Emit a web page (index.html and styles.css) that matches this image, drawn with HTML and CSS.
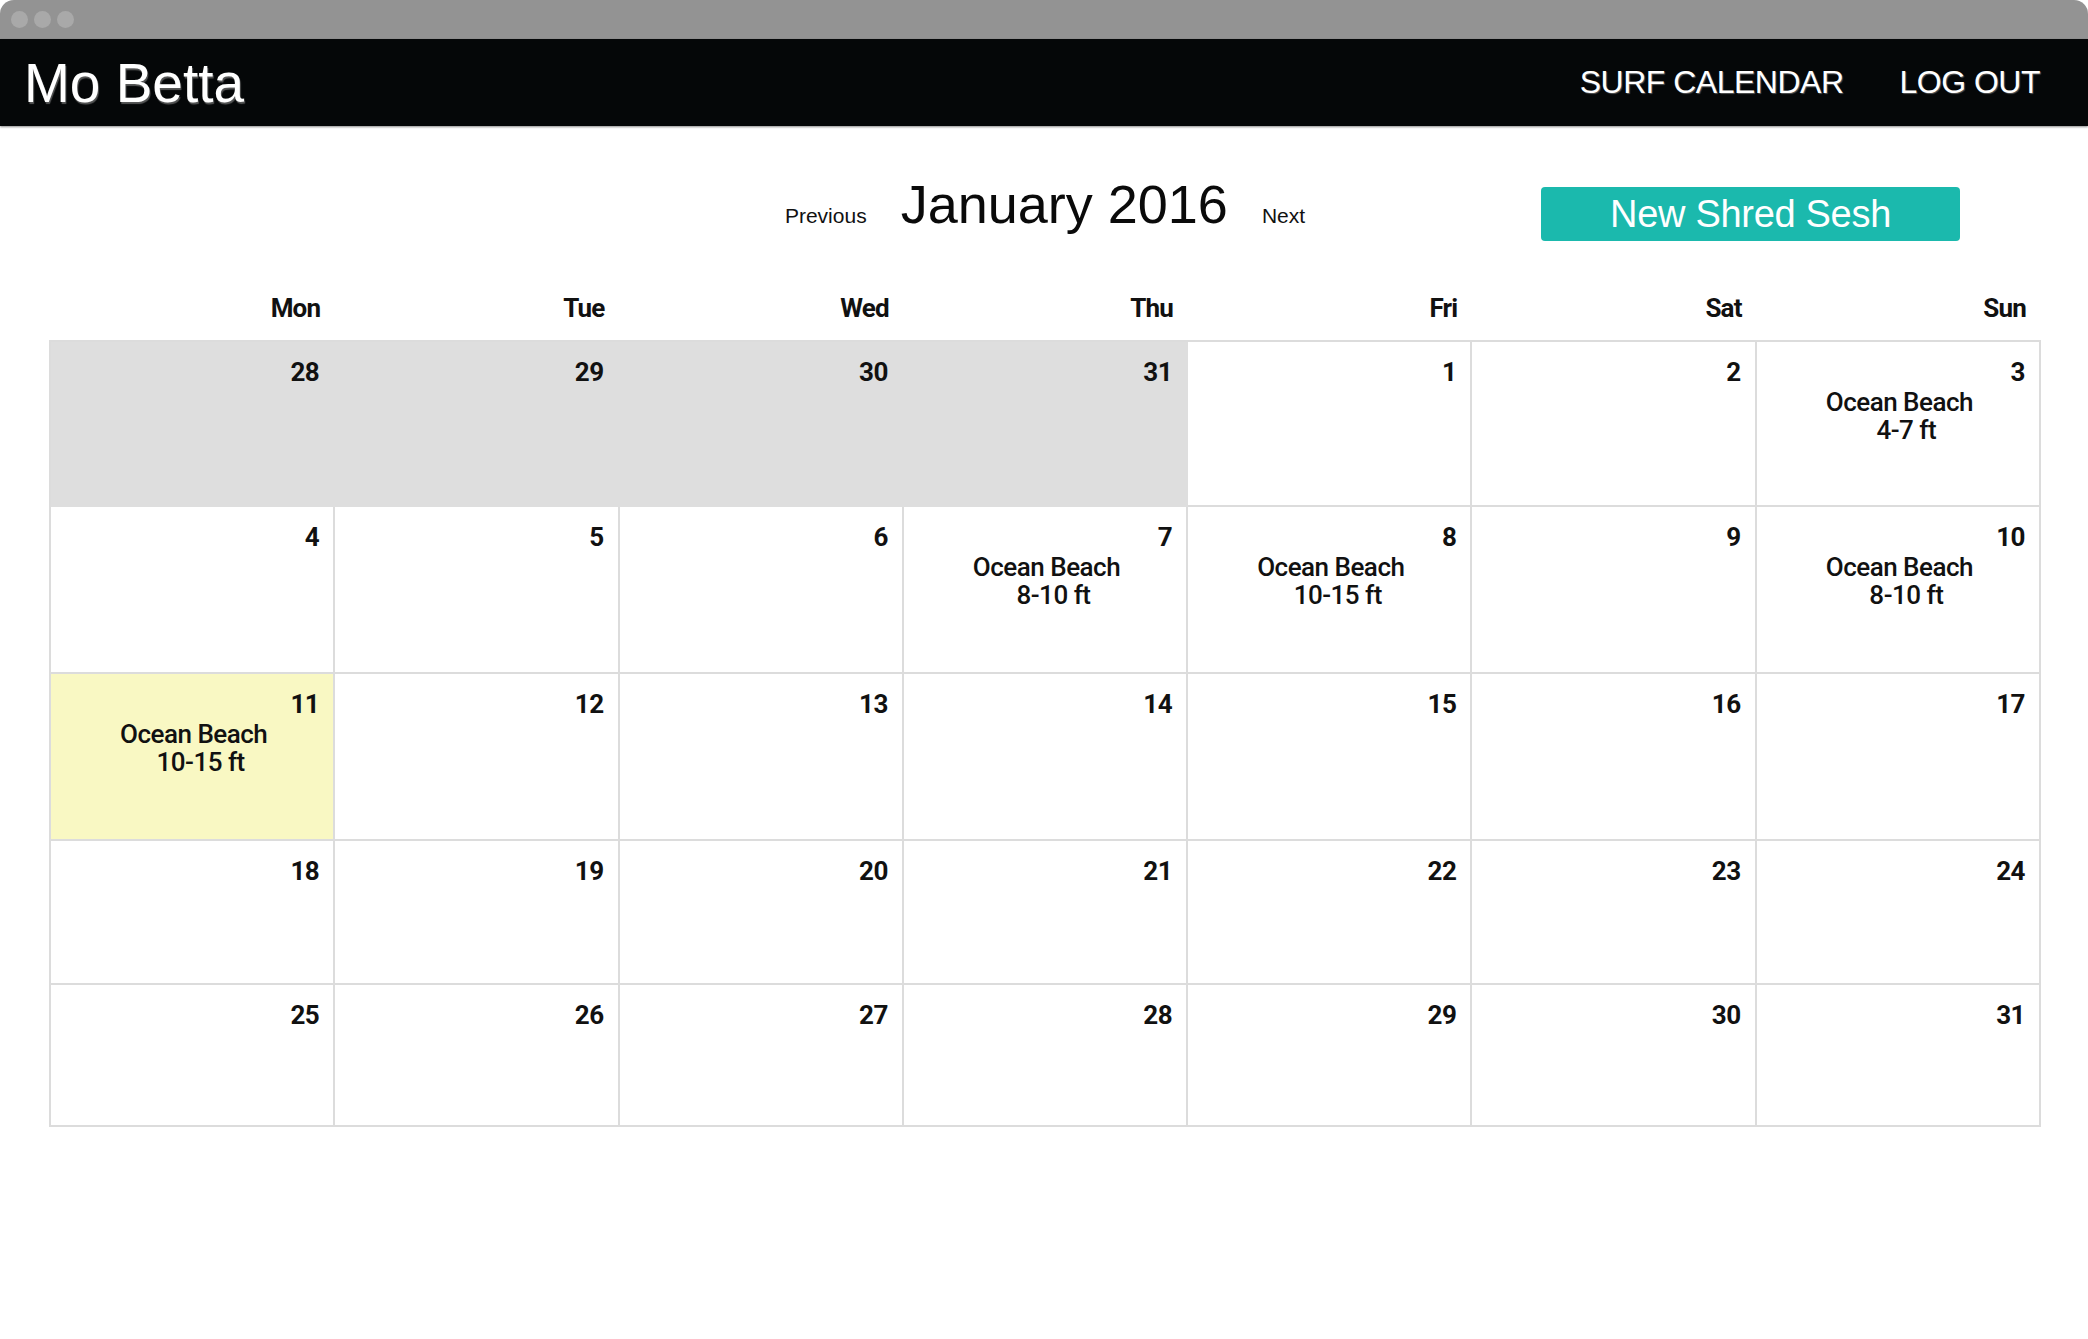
FILE: index.html
```html
<!DOCTYPE html>
<html lang="en">
<head>
<meta charset="utf-8">
<title>Mo Betta - Surf Calendar</title>
<link rel="stylesheet" href="styles.css">
</head>
<body>
<div class="window-bar">
  <span class="dot"></span><span class="dot"></span><span class="dot"></span>
</div>
<header class="nav">
  <div class="brand">Mo Betta</div>
  <nav class="links">
    <a href="#">SURF CALENDAR</a>
    <a href="#">LOG OUT</a>
  </nav>
</header>
<main class="page">
  <div class="toolbar">
    <div></div>
    <div class="month-nav">
      <a href="#" class="step">Previous</a>
      <h1 class="month">January 2016</h1>
      <a href="#" class="step">Next</a>
    </div>
    <div class="action">
      <button class="new-btn">New Shred Sesh</button>
    </div>
  </div>

  <div class="weekdays">
    <div>Mon</div><div>Tue</div><div>Wed</div><div>Thu</div><div>Fri</div><div>Sat</div><div>Sun</div>
  </div>

  <div class="calendar">
    <div class="day other"><div class="num">28</div></div>
    <div class="day other"><div class="num">29</div></div>
    <div class="day other"><div class="num">30</div></div>
    <div class="day other"><div class="num">31</div></div>
    <div class="day"><div class="num">1</div></div>
    <div class="day"><div class="num">2</div></div>
    <div class="day"><div class="num">3</div><div class="event"><span>Ocean Beach</span><span class="size">4-7 ft</span></div></div>

    <div class="day"><div class="num">4</div></div>
    <div class="day"><div class="num">5</div></div>
    <div class="day"><div class="num">6</div></div>
    <div class="day"><div class="num">7</div><div class="event"><span>Ocean Beach</span><span class="size">8-10 ft</span></div></div>
    <div class="day"><div class="num">8</div><div class="event"><span>Ocean Beach</span><span class="size">10-15 ft</span></div></div>
    <div class="day"><div class="num">9</div></div>
    <div class="day"><div class="num">10</div><div class="event"><span>Ocean Beach</span><span class="size">8-10 ft</span></div></div>

    <div class="day today"><div class="num">11</div><div class="event"><span>Ocean Beach</span><span class="size">10-15 ft</span></div></div>
    <div class="day"><div class="num">12</div></div>
    <div class="day"><div class="num">13</div></div>
    <div class="day"><div class="num">14</div></div>
    <div class="day"><div class="num">15</div></div>
    <div class="day"><div class="num">16</div></div>
    <div class="day"><div class="num">17</div></div>

    <div class="day"><div class="num">18</div></div>
    <div class="day"><div class="num">19</div></div>
    <div class="day"><div class="num">20</div></div>
    <div class="day"><div class="num">21</div></div>
    <div class="day"><div class="num">22</div></div>
    <div class="day"><div class="num">23</div></div>
    <div class="day"><div class="num">24</div></div>

    <div class="day"><div class="num">25</div></div>
    <div class="day"><div class="num">26</div></div>
    <div class="day"><div class="num">27</div></div>
    <div class="day"><div class="num">28</div></div>
    <div class="day"><div class="num">29</div></div>
    <div class="day"><div class="num">30</div></div>
    <div class="day"><div class="num">31</div></div>
  </div>
</main>
</body>
</html>
```

FILE: styles.css
```css
* {
  box-sizing: border-box;
}

html, body {
  margin: 0;
  padding: 0;
  background: #ffffff;
}

body {
  font-family: "Liberation Sans", Arial, sans-serif;
  color: #111111;
}

.window-bar {
  height: 39px;
  background: #939393;
  border-radius: 14px 14px 0 0;
  display: flex;
  align-items: center;
  gap: 6px;
  padding-left: 11px;
}

.dot {
  width: 17px;
  height: 17px;
  border-radius: 50%;
  background: #a9a9a9;
}

.nav {
  height: 87px;
  background: #050708;
  display: flex;
  align-items: center;
  justify-content: space-between;
  padding: 0 48px 0 24px;
  box-shadow: 0 1px 2px rgba(0, 0, 0, 0.45);
  position: relative;
}

.brand {
  color: #ffffff;
  font-size: 55px;
  line-height: 62px;
  text-shadow: 1px 2px 1px rgba(120, 120, 120, 0.7);
}

.links {
  display: flex;
  gap: 56px;
}

.links a {
  color: #ffffff;
  text-decoration: none;
  font-size: 32px;
  letter-spacing: -0.5px;
  line-height: 37px;
  text-shadow: 1px 1px 1px rgba(120, 120, 120, 0.7);
}

.page {
  margin: 0 47px 0 49px;
}

.toolbar {
  margin-top: 48px;
  display: grid;
  grid-template-columns: 1fr auto 1fr;
  align-items: start;
}

.month-nav {
  display: flex;
  align-items: baseline;
  gap: 34px;
}

.step {
  color: #111111;
  text-decoration: none;
  font-size: 21px;
}

.month {
  margin: 0;
  font-weight: normal;
  font-size: 54px;
  line-height: 61px;
  color: #0a0a0a;
}

.action {
  justify-self: end;
  padding-right: 81px;
}

.new-btn {
  margin-top: 13px;
  width: 419px;
  height: 54px;
  border: none;
  border-radius: 4px;
  background: #1bb9ad;
  color: #ffffff;
  font-family: "Liberation Sans", Arial, sans-serif;
  font-size: 38px;
  letter-spacing: -0.3px;
  padding: 0;
  line-height: 54px;
}

.weekdays {
  margin-top: 52px;
  padding: 0 0 17px 2px;
  display: grid;
  grid-template-columns: repeat(7, 1fr);
  font-family: Roboto, "Liberation Sans", sans-serif;
  font-weight: 700;
  font-size: 26px;
  letter-spacing: -0.8px;
  line-height: 30px;
}

.weekdays div {
  text-align: right;
  padding-right: 15px;
}

.calendar {
  display: grid;
  grid-template-columns: repeat(7, 1fr);
  grid-template-rows: 165px 167px 167px 144px 142px;
  border-top: 2px solid #dcdcdc;
  border-left: 2px solid #dcdcdc;
  font-family: Roboto, "Liberation Sans", sans-serif;
}

.day {
  border-right: 2px solid #dcdcdc;
  border-bottom: 2px solid #dcdcdc;
  padding: 15px 14px 0 17px;
  background: #ffffff;
}

.day.other {
  background: #dedede;
  border-color: #dedede;
}

.day.today {
  background: #f9f8c3;
}

.num {
  text-align: right;
  font-weight: 700;
  font-size: 26px;
  line-height: 30px;
  letter-spacing: -0.5px;
}

.event {
  margin-top: 1px;
  display: flex;
  flex-direction: column;
  align-items: center;
  font-weight: 500;
  font-size: 26px;
  line-height: 28px;
  letter-spacing: -0.5px;
}

.event .size {
  padding-left: 14px;
}
```
